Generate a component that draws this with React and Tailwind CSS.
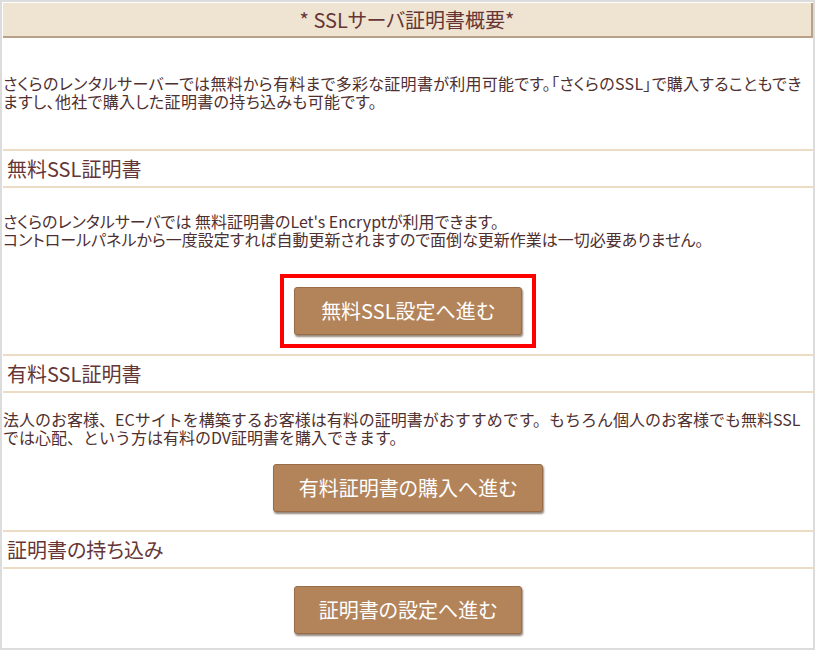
export default function App() {
    const font = "[font-family:'Noto_Sans_CJK_JP','Noto_Sans',sans-serif]";
    const palt = "[font-feature-settings:'palt']";

    const Rule = () => <div className="h-[2px] bg-[#ecdcc5]"></div>;

    const Heading = ({ children }) => (
        <div>
            <Rule />
            <div className={`h-[35px] flex items-center pl-[4px] text-[20px] text-[#663636] ${palt}`}>
                {children}
            </div>
            <Rule />
        </div>
    );

    const Button = ({ children, width }) => (
        <button
            className={`${width} h-[48px] bg-[#b3845a] border border-[#976c47] rounded-[3px] shadow-[1px_2px_2px_rgba(60,35,15,0.55)] text-white text-[20px] flex items-center justify-center ${palt}`}
        >
            {children}
        </button>
    );

    return (
        <div className={`w-[815px] h-[650px] bg-white border-2 border-[#dcdcdc] pl-[1px] pt-[1px] overflow-hidden ${font}`}>
            <div className={`h-[35px] bg-[#efe3d1] border-b-2 border-r-2 border-[#b9a088] flex items-center justify-center text-[20px] text-[#663636] ${palt}`}>
                * SSLサーバ証明書概要*
            </div>

            <p className={`mt-[36px] text-[16px] leading-[18px] tracking-[0.3px] text-[#4f3030] whitespace-nowrap ${palt}`}>
                さくらのレンタルサーバーでは無料から有料まで多彩な証明書が利用可能です。「さくらのSSL」で購入することもでき
                <br />
                ますし、他社で購入した証明書の持ち込みも可能です。
            </p>

            <div className="mt-[39px]">
                <Heading>無料SSL証明書</Heading>
            </div>

            <p className={`mt-[24px] text-[16px] leading-[18px] text-[#4f3030] whitespace-nowrap ${palt}`}>
                さくらのレンタルサーバでは 無料証明書のLet's Encryptが利用できます。
                <br />
                コントロールパネルから一度設定すれば自動更新されますので面倒な更新作業は一切必要ありません。
            </p>

            <div className="mt-[26px] flex justify-center">
                <div className="w-[256px] h-[74px] border-[4px] border-[#ff0000] flex items-center justify-center">
                    <Button width="w-[228px]">無料SSL設定へ進む</Button>
                </div>
            </div>

            <div className="mt-[6px]">
                <Heading>有料SSL証明書</Heading>
            </div>

            <p className="mt-[17px] text-[16px] leading-[18px] text-[#4f3030] whitespace-nowrap">
                法人のお客様、ECサイトを構築するお客様は有料の証明書がおすすめです。もちろん個人のお客様でも無料SSL
                <br />
                では心配、という方は有料のDV証明書を購入できます。
            </p>

            <div className="mt-[18px] flex justify-center">
                <Button width="w-[270px]">有料証明書の購入へ進む</Button>
            </div>

            <div className="mt-[18px]">
                <Heading>証明書の持ち込み</Heading>
            </div>

            <div className="mt-[17px] flex justify-center">
                <Button width="w-[228px]">証明書の設定へ進む</Button>
            </div>
        </div>
    );
}
